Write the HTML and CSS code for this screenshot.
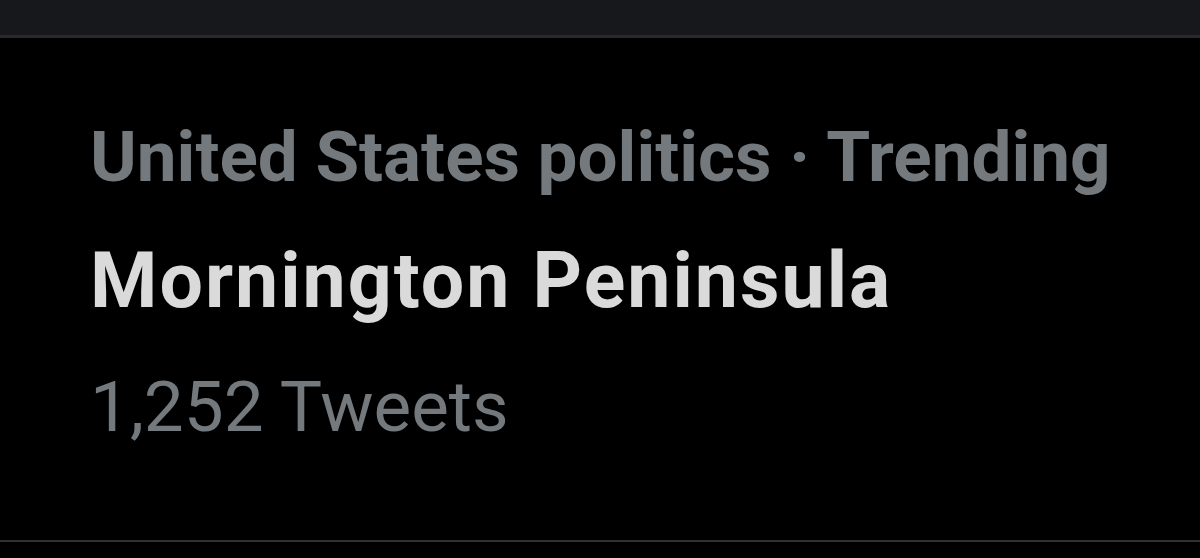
FILE: index.html
```html
<!DOCTYPE html>
<html>
<head>
<meta charset="utf-8">
<link rel="stylesheet" href="styles.css">
</head>
<body>
<div class="topbar"></div>
<div class="trend">
  <div class="meta">United States politics · Trending</div>
  <div class="title">Mornington Peninsula</div>
  <div class="count">1,252 Tweets</div>
</div>
<div class="divider"></div>
</body>
</html>
```

FILE: styles.css
```css
html, body {
  margin: 0;
  padding: 0;
  background: #000;
  width: 1200px;
  height: 558px;
  overflow: hidden;
}
.topbar {
  height: 35px;
  background: #16181c;
  border-bottom: 3px solid #29292d;
}
.trend {
  height: 502px;
  padding-left: 90px;
  padding-top: 56px;
  box-sizing: border-box;
  font-family: Roboto, "Liberation Sans", sans-serif;
}
.meta, .title, .count {
  line-height: 125px;
  height: 125px;
  white-space: nowrap;
}
.meta {
  color: #74797e;
  font-weight: 700;
  font-size: 71px;
}
.title {
  color: #dadada;
  font-weight: 700;
  font-size: 77px;
  letter-spacing: 2px;
}
.count {
  color: #74797e;
  font-weight: 400;
  font-size: 71px;
}
.divider {
  height: 2px;
  background: #2f3034;
}
```
